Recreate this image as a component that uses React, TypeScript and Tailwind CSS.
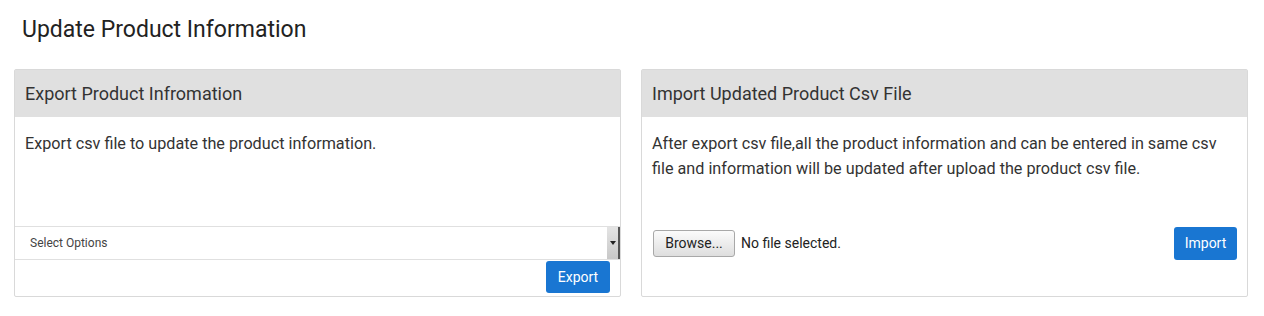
export default function App() {
	return (
		<div className="h-[316px] w-[1264px] bg-white font-['Roboto',sans-serif] text-[#333]">
			<h1 className="pl-[22px] pt-[15px] text-[23px] leading-[30px] text-[#222]">Update Product Information</h1>

			<div className="mt-[24px] flex gap-[20px] pl-[14px] pr-[16px]">
				{/* export panel */}
				<div className="flex h-[228px] w-[607px] flex-col rounded-[2px] border border-[#d9d9d9]">
					<div className="flex h-[47px] items-center bg-[#e0e0e0] pl-[10px] text-[18px] text-[#333]">
						Export Product Infromation
					</div>
					<div className="flex flex-1 flex-col">
						<p className="px-[10px] pt-[14px] text-[16.2px] leading-[25px]">
							Export csv file to update the product information.
						</p>
						<div className="mt-auto flex h-[34px] items-center border-y border-[#e0e0e0]">
							<span className="flex-1 pl-[15px] text-[12px] text-[#444]">Select Options</span>
							<div className="flex h-[32px] w-[13px] items-center justify-center border-r-2 border-[#555] bg-gradient-to-b from-[#e4e4e4] to-[#c8c8c8]">
								<svg width="6" height="4" viewBox="0 0 6 4">
									<path d="M0 0h6L3 4z" fill="#222" />
								</svg>
							</div>
						</div>
						<div className="flex justify-end pb-[3px] pr-[10px] pt-[1px]">
							<button className="h-[32px] w-[64px] rounded-[3px] bg-[#1976d2] text-[14px] text-white">Export</button>
						</div>
					</div>
				</div>

				{/* import panel */}
				<div className="flex h-[228px] w-[607px] flex-col rounded-[2px] border border-[#d9d9d9]">
					<div className="flex h-[47px] items-center bg-[#e0e0e0] pl-[10px] text-[18px] text-[#333]">
						Import Updated Product Csv File
					</div>
					<div className="flex flex-1 flex-col px-[10px] pt-[14px]">
						<p className="max-w-[572px] text-[16.2px] leading-[25px]">
							After export csv file,all the product information and can be entered in same csv file and information will be updated after upload the product csv file.
						</p>
						<div className="mt-[46px] flex items-center">
							<button className="ml-[1px] h-[27px] w-[82px] rounded-[3px] border border-[#a8a8a8] bg-gradient-to-b from-[#fbfbfb] to-[#dedede] text-[14px] text-[#222]">
								Browse...
							</button>
							<span className="ml-[6px] text-[14px] text-[#222]">No file selected.</span>
							<button className="ml-auto h-[33px] w-[63px] rounded-[3px] bg-[#1976d2] text-[14px] text-white">Import</button>
						</div>
					</div>
				</div>
			</div>
		</div>
	);
}
